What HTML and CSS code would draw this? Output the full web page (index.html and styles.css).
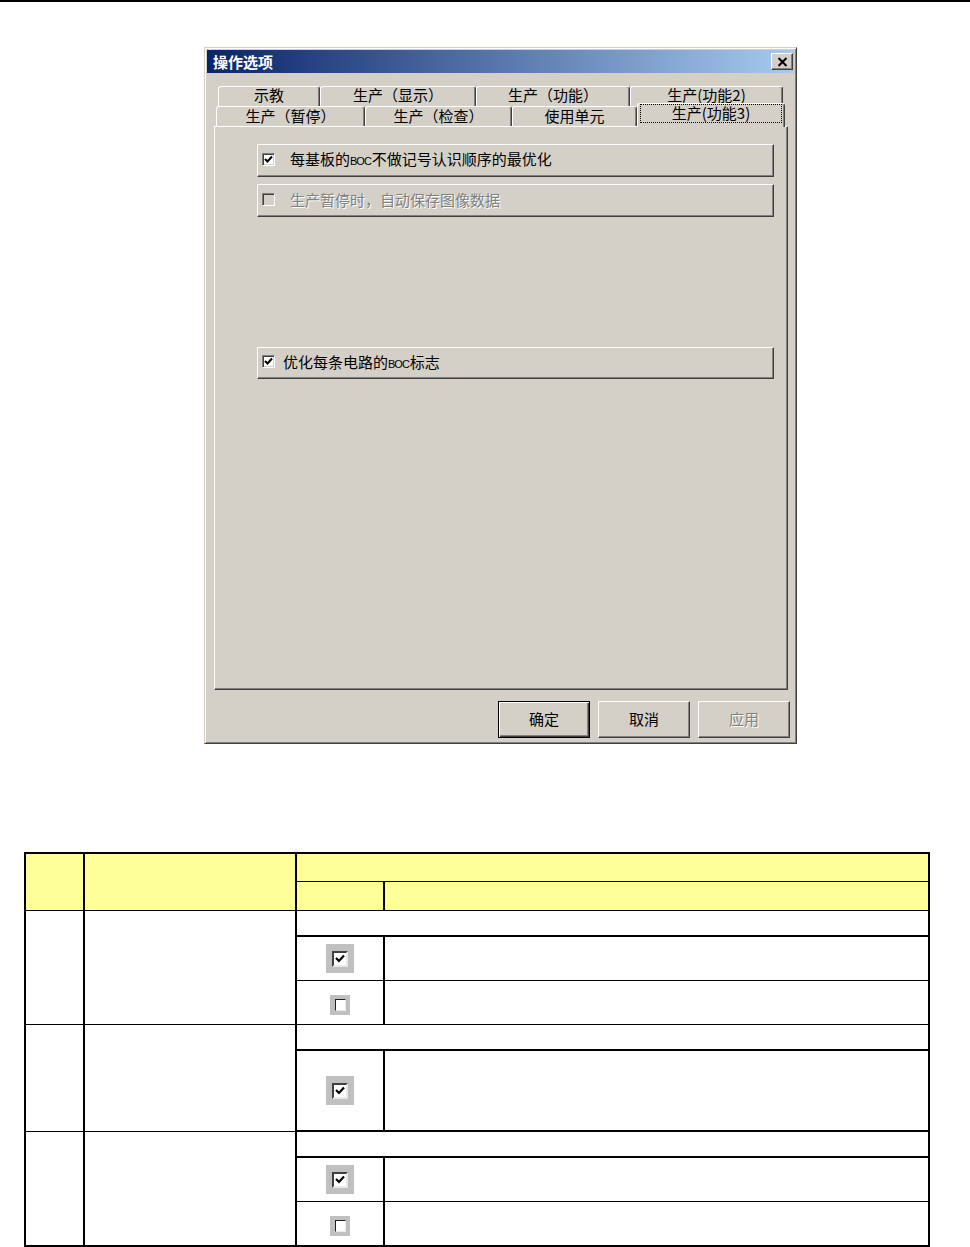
FILE: index.html
```html
<!DOCTYPE html>
<html lang="zh-CN">
<head>
    <meta charset="UTF-8">
    <title>操作选项</title>
    <link rel="stylesheet" href="styles.css">
</head>
<body>
    <div class="topline"></div>

    <div class="dialog">
        <div class="titlebar">
            <span class="title">操作选项</span>
            <span class="close">
                <svg width="11" height="10" viewBox="0 0 11 10"><path d="M1.5 1 L9.5 9 M9.5 1 L1.5 9" stroke="#000" stroke-width="2" fill="none"/></svg>
            </span>
        </div>
        <div class="dlg-body">
            <div class="tabrow back">
                <div class="tab">示教</div>
                <div class="tab">生产（显示）</div>
                <div class="tab">生产（功能）</div>
                <div class="tab">生产(功能2)</div>
            </div>
            <div class="tabrow front">
                <div class="tab">生产（暂停）</div>
                <div class="tab">生产（检查）</div>
                <div class="tab">使用单元</div>
                <div class="tab active"><span class="focus">生产(功能3)</span></div>
            </div>
            <div class="panel">
                <div class="optbox">
                    <span class="chk"><svg width="9" height="9" viewBox="0 0 9 9"><path d="M1 4 L3.5 6.5 L8 1.5" stroke="#000" stroke-width="2" fill="none"/></svg></span>
                    <span class="label">每基板的<span class="latin">BOC</span>不做记号认识顺序的最优化</span>
                </div>
                <div class="optbox disabled">
                    <span class="chk"></span>
                    <span class="label">生产暂停时，自动保存图像数据</span>
                </div>
                <div class="optbox tight far">
                    <span class="chk"><svg width="9" height="9" viewBox="0 0 9 9"><path d="M1 4 L3.5 6.5 L8 1.5" stroke="#000" stroke-width="2" fill="none"/></svg></span>
                    <span class="label">优化每条电路的<span class="latin">BOC</span>标志</span>
                </div>
            </div>
            <div class="buttons">
                <button class="btn default">确定</button>
                <button class="btn">取消</button>
                <button class="btn disabled">应用</button>
            </div>
        </div>
    </div>

    <table class="spec">
        <colgroup>
            <col class="c-no">
            <col class="c-item">
            <col class="c-img">
            <col>
        </colgroup>
        <tr class="h1"><th rowspan="2"></th><th rowspan="2"></th><th colspan="2"></th></tr>
        <tr class="h2"><th class="img"></th><th></th></tr>

        <tr class="sub"><td rowspan="3"></td><td rowspan="3"></td><td colspan="2"></td></tr>
        <tr class="opt"><td class="img"><span class="tchk on"><span class="box"><svg width="10" height="9" viewBox="0 0 10 9"><path d="M1 4 L4 7 L9 1.5" stroke="#000" stroke-width="2.2" fill="none"/></svg></span></span></td><td></td></tr>
        <tr class="opt"><td class="img"><span class="tchk off"><span class="box"></span></span></td><td></td></tr>

        <tr class="sub"><td rowspan="2"></td><td rowspan="2"></td><td colspan="2"></td></tr>
        <tr class="opt tall group-end"><td class="img"><span class="tchk on"><span class="box"><svg width="10" height="9" viewBox="0 0 10 9"><path d="M1 4 L4 7 L9 1.5" stroke="#000" stroke-width="2.2" fill="none"/></svg></span></span></td><td></td></tr>

        <tr class="sub"><td rowspan="3"></td><td rowspan="3"></td><td colspan="2"></td></tr>
        <tr class="opt"><td class="img"><span class="tchk on"><span class="box"><svg width="10" height="9" viewBox="0 0 10 9"><path d="M1 4 L4 7 L9 1.5" stroke="#000" stroke-width="2.2" fill="none"/></svg></span></span></td><td></td></tr>
        <tr class="opt"><td class="img"><span class="tchk off"><span class="box"></span></span></td><td></td></tr>
    </table>
</body>
</html>
```

FILE: styles.css
```css
body {
    margin: 0;
    background-color: #fff;
    font-family: "Noto Sans CJK SC", sans-serif;
}
.topline {
    height: 2px;
    background-color: #000;
}

/* dialog window */
.dialog {
    box-sizing: border-box;
    width: 593px;
    height: 697px;
    margin: 45px 0 0 204px;
    padding: 2px;
    background-color: #d4d0c8;
    border: 1px solid;
    border-color: #d4d0c8 #404040 #404040 #d4d0c8;
    box-shadow: inset 1px 1px #fff, inset -1px -1px #808080;
    display: flex;
    flex-direction: column;
    font-size: 15px;
    color: #000;
}
.titlebar {
    height: 23px;
    display: flex;
    align-items: center;
    justify-content: space-between;
    padding: 0 1px 0 6px;
    background: linear-gradient(to right, #0a246a, #a6caf0);
}
.title {
    color: #fff;
    font-weight: bold;
    font-size: 15px;
    line-height: 1;
}
.close {
    box-sizing: border-box;
    width: 22px;
    height: 17px;
    display: flex;
    align-items: center;
    justify-content: center;
    background-color: #d4d0c8;
    border: 1px solid;
    border-color: #fff #404040 #404040 #fff;
    box-shadow: inset -1px -1px #808080;
}
.dlg-body {
    flex: 1;
    padding: 13px 6px 0 7px;
    display: flex;
    flex-direction: column;
}

/* tabs */
.tabrow {
    display: grid;
    height: 20px;
}
.tabrow.back {
    grid-template-columns: 102px 156px 154px 153px;
    padding-left: 4px;
}
.tabrow.front {
    grid-template-columns: 149px 147px 125px 148px;
    padding-left: 2px;
}
.tab {
    box-sizing: border-box;
    border: 1px solid;
    border-bottom: none;
    border-color: #fff #404040 #404040 #fff;
    border-radius: 3px 3px 0 0;
    box-shadow: inset -1px 0 #808080;
    text-align: center;
    line-height: 16px;
    white-space: nowrap;
}
.tabrow.front .tab {
    padding-top: 1px;
}
.tabrow.front .tab.active {
    position: relative;
    z-index: 1;
    margin: -3px 0 -1px;
    background-color: #d4d0c8;
    display: flex;
    align-items: flex-start;
    justify-content: center;
    padding: 1px 3px 0;
}
.focus {
    flex: 1;
    outline: 1px dotted #000;
    line-height: 16px;
    padding-bottom: 1px;
}

.panel {
    box-sizing: border-box;
    height: 564px;
    padding: 17px 13px 0 42px;
    border: 1px solid;
    border-color: #fff #404040 #404040 #fff;
    box-shadow: inset -1px -1px #808080;
    display: flex;
    flex-direction: column;
    gap: 7px;
}
.optbox {
    box-sizing: border-box;
    height: 33px;
    display: flex;
    align-items: center;
    gap: 15px;
    padding: 0 0 3px 4px;
    border: 1px solid;
    border-color: #fff #404040 #404040 #fff;
    box-shadow: inset -1px -1px #808080;
}
.optbox.tight {
    gap: 8px;
}
.optbox.far {
    margin-top: 123px;
    height: 32px;
}
.label {
    line-height: 1;
    white-space: nowrap;
}
.latin {
    font-family: "Liberation Sans", sans-serif;
    font-size: 11px;
    letter-spacing: -1px;
    margin-right: 1px;
}
.chk {
    box-sizing: border-box;
    width: 13px;
    height: 13px;
    display: flex;
    align-items: center;
    justify-content: center;
    background-color: #fff;
    border: 1px solid;
    border-color: #808080 #fff #fff #808080;
    box-shadow: inset 1px 1px #404040, inset -1px -1px #d4d0c8;
}
.optbox.disabled .chk {
    background-color: #d4d0c8;
}
.optbox.disabled .label {
    color: #808080;
    text-shadow: 1px 1px #fff;
}

/* buttons */
.buttons {
    display: flex;
    justify-content: flex-end;
    gap: 8px;
    margin: 11px -2px 0 0;
}
.btn {
    box-sizing: border-box;
    width: 92px;
    height: 37px;
    font-family: "Noto Sans CJK SC", sans-serif;
    font-size: 15px;
    color: #000;
    background-color: #d4d0c8;
    border: 1px solid;
    border-color: #fff #404040 #404040 #fff;
    box-shadow: inset -1px -1px #808080;
    padding: 0 0 3px;
}
.btn.default {
    border-color: #000;
    box-shadow: inset 1px 1px #fff, inset -1px -1px #404040, inset -2px -2px #808080;
}
.btn.disabled {
    color: #808080;
    text-shadow: 1px 1px #fff;
}

/* spec table */
.spec {
    width: 906px;
    margin: 108px 0 0 24px;
    border-collapse: collapse;
    table-layout: fixed;
    border: 2px solid #000;
}
.c-no { width: 59px; }
.c-item { width: 212px; }
.c-img { width: 88px; }
.spec th, .spec td {
    border: 1px solid #000;
    padding: 0;
}
.spec tr > :nth-child(1),
.spec tr > :nth-child(2) {
    border-right-width: 2px;
}
.spec .img {
    border-right-width: 2px;
    text-align: center;
    vertical-align: middle;
}
.spec th {
    background-color: #ffff99;
}
.h1 th { height: 27px; }
.h2 th { height: 28px; }
.sub td { height: 24px; }
.sub td[colspan] { border-bottom-width: 2px; }
.opt td { height: 43px; }
.opt.tall td { height: 79px; }
.group-end td { border-bottom-width: 2px; }
.tchk {
    display: inline-flex;
    align-items: center;
    justify-content: center;
    vertical-align: middle;
    background-color: #c0c0c0;
}
.tchk.on {
    width: 28px;
    height: 29px;
}
.tchk.off {
    width: 20px;
    height: 20px;
}
.tchk .box {
    box-sizing: border-box;
    display: flex;
    align-items: center;
    justify-content: center;
    background-color: #fff;
    border: 2px solid;
    border-color: #404040 #e8e8e8 #e8e8e8 #404040;
}
.tchk.on .box {
    width: 16px;
    height: 16px;
}
.tchk.off .box {
    width: 11px;
    height: 12px;
    border-width: 1px;
    border-color: #202020 #e8e8e8 #e8e8e8 #202020;
}
```
